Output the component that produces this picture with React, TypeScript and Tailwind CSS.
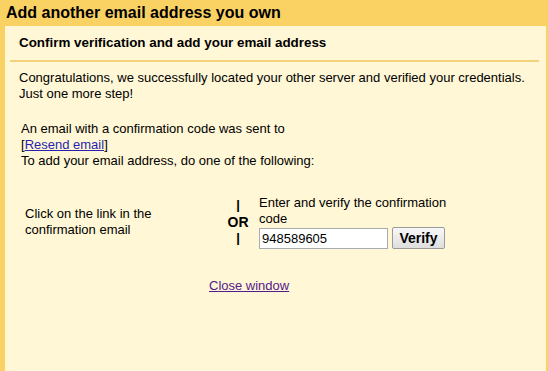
import React from "react";

export default function App() {
  return (
    <div
      className="w-[548px] h-[371px] bg-[#fad163] flex flex-col overflow-hidden text-black"
      style={{ fontFamily: '"Liberation Sans", Arial, sans-serif' }}
    >
      <div className="h-[26px] px-[6px] flex items-center text-[16px] font-bold leading-none">
        Add another email address you own
      </div>
      <div className="flex-1 ml-[5px] mr-[2px] bg-[#fff7d6] px-[5px]">
        <div className="pl-[9px] pt-[9px] pb-[9px] text-[13.4px] leading-[16px] font-bold">
          Confirm verification and add your email address
        </div>
        <div className="h-[2px] bg-[#f3d27c] mr-[2px]"></div>
        <div className="pl-[9px] pt-[8px] text-[13px] leading-[16px]">
          <p>
            Congratulations, we successfully located your other server and verified your credentials.
            <br />
            Just one more step!
          </p>
          <div className="mt-[19px] pl-[2px]">
            <p>An email with a confirmation code was sent to</p>
            <p>
              [<a href="#" className="text-[#2a1fb0] underline">Resend email</a>]
            </p>
            <p>To add your email address, do one of the following:</p>
          </div>
          <div className="mt-[26px] flex items-center">
            <div className="w-[204px] pl-[6px]">
              <div className="w-[150px]">Click on the link in the confirmation email</div>
            </div>
            <div className="w-[30px] flex flex-col items-center font-bold leading-[16.5px]">
              <span>|</span>
              <span className="text-[14px]">OR</span>
              <span>|</span>
            </div>
            <div className="pl-[6px] w-[200px]">
              <div className="w-[190px]">Enter and verify the confirmation code</div>
              <div className="flex items-center gap-[4px]">
                <input
                  readOnly
                  value="948589605"
                  className="w-[129px] h-[21px] bg-white border border-[#a5acb2] px-[2px] text-[13px] outline-none"
                  style={{ fontFamily: '"Liberation Sans", Arial, sans-serif' }}
                />
                <button className="w-[53px] h-[22px] rounded-[2px] border border-[#9a9a9a] bg-gradient-to-b from-[#f8f8f8] to-[#dedede] text-[14px] font-bold leading-none">
                  Verify
                </button>
              </div>
            </div>
          </div>
          <div className="mt-[29px] pl-[190px]">
            <a href="#" className="text-[#551a8b] underline">Close window</a>
          </div>
        </div>
      </div>
    </div>
  );
}
